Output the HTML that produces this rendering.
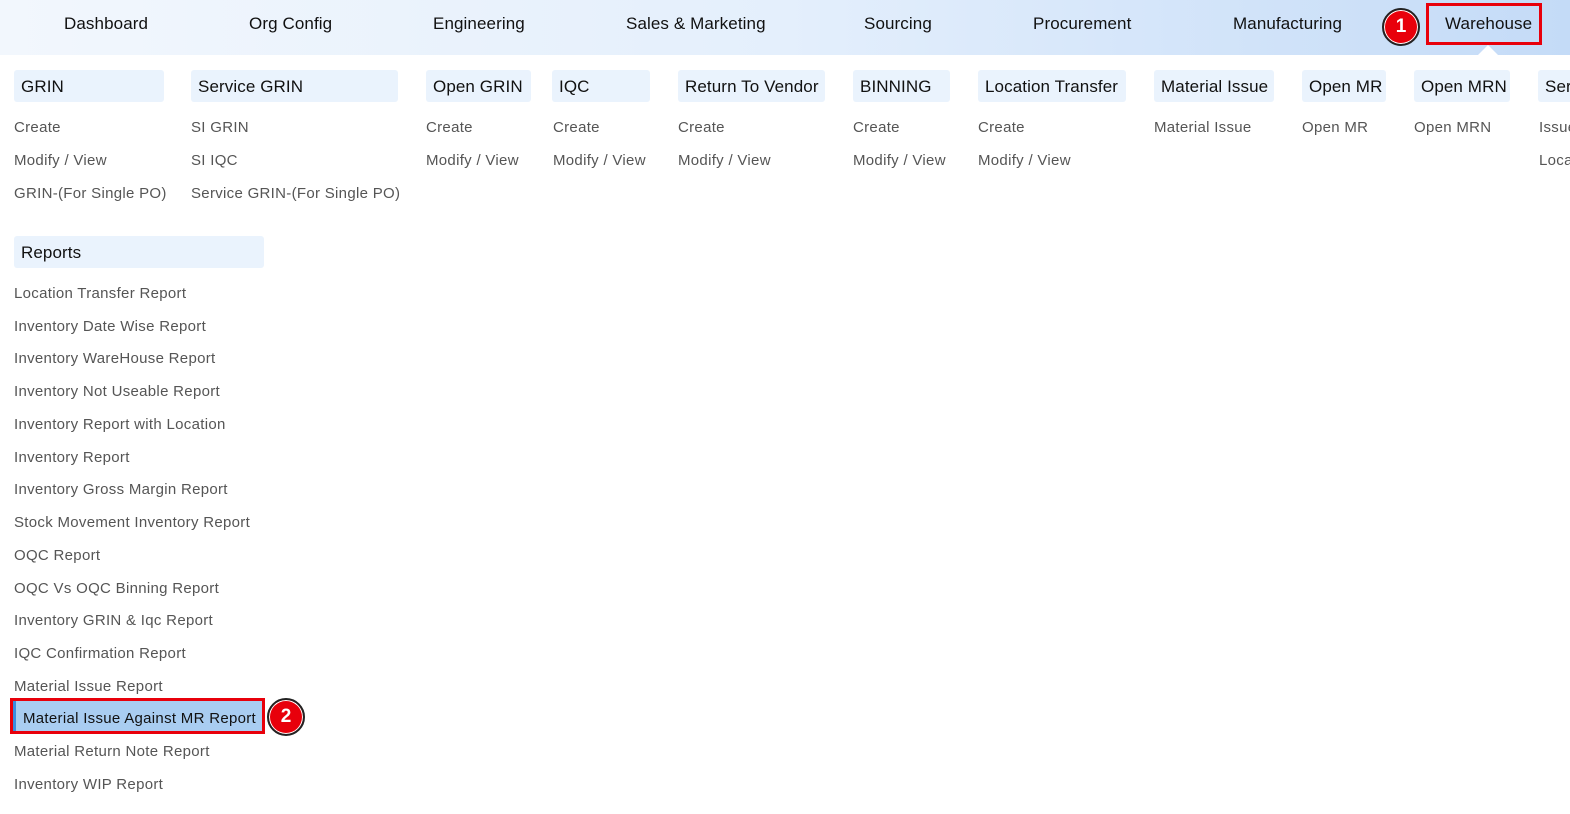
<!DOCTYPE html>
<html><head><style>
body{margin:0;width:1570px;height:814px;overflow:hidden;background:#fff;font-family:"Liberation Sans",sans-serif;position:relative}
.nav{position:absolute;left:0;top:0;width:1570px;height:55px;background:linear-gradient(90deg,#f2f7fd 0%,#e4effc 50%,#c4dbf7 100%)}
.nav span{position:absolute;top:14px;font-size:17px;color:#111;letter-spacing:0.1px}
.h{position:absolute;top:70px;height:32px;background:#eaf3fd;border-radius:3px;font-size:17px;color:#111;line-height:33px;padding-left:7px;box-sizing:border-box;white-space:nowrap;overflow:hidden;letter-spacing:0.1px}
.l{position:absolute;font-size:15px;color:#555;white-space:nowrap;letter-spacing:0.3px;margin-top:1px}
.red{position:absolute;border:3px solid #e8000b;box-sizing:border-box}
.badge{position:absolute;width:38px;height:38px;border-radius:50%;background:#e8000b;border:2px solid #222;box-sizing:border-box;color:#fff;font-weight:bold;font-size:19px;text-align:center;line-height:34px;box-shadow:0 0 0 1px #fff inset}
</style></head><body>
<div class="nav">
<span style="left:64px">Dashboard</span>
<span style="left:249px">Org Config</span>
<span style="left:433px">Engineering</span>
<span style="left:626px">Sales &amp; Marketing</span>
<span style="left:864px">Sourcing</span>
<span style="left:1033px">Procurement</span>
<span style="left:1233px">Manufacturing</span>
<span style="left:1445px">Warehouse</span>
</div>
<div style="position:absolute;left:1478px;top:45px;width:0;height:0;border-left:10px solid transparent;border-right:10px solid transparent;border-bottom:10px solid #fff"></div>
<div class="red" style="left:1426px;top:3px;width:116px;height:42px"></div>
<div class="badge" style="left:1382px;top:8px">1</div>

<div class="h" style="left:14px;width:150px">GRIN</div>
<div class="h" style="left:191px;width:207px">Service GRIN</div>
<div class="h" style="left:426px;width:105px">Open GRIN</div>
<div class="h" style="left:552px;width:98px">IQC</div>
<div class="h" style="left:678px;width:147px">Return To Vendor</div>
<div class="h" style="left:853px;width:97px">BINNING</div>
<div class="h" style="left:978px;width:148px">Location Transfer</div>
<div class="h" style="left:1154px;width:120px">Material Issue</div>
<div class="h" style="left:1302px;width:84px">Open MR</div>
<div class="h" style="left:1414px;width:96px">Open MRN</div>
<div class="h" style="left:1538px;width:60px">Service</div>

<div class="l" style="left:14px;top:118px">Create</div>
<div class="l" style="left:14px;top:151px">Modify / View</div>
<div class="l" style="left:14px;top:184px">GRIN-(For Single PO)</div>
<div class="l" style="left:191px;top:118px">SI GRIN</div>
<div class="l" style="left:191px;top:151px">SI IQC</div>
<div class="l" style="left:191px;top:184px">Service GRIN-(For Single PO)</div>
<div class="l" style="left:426px;top:118px">Create</div>
<div class="l" style="left:426px;top:151px">Modify / View</div>
<div class="l" style="left:553px;top:118px">Create</div>
<div class="l" style="left:553px;top:151px">Modify / View</div>
<div class="l" style="left:678px;top:118px">Create</div>
<div class="l" style="left:678px;top:151px">Modify / View</div>
<div class="l" style="left:853px;top:118px">Create</div>
<div class="l" style="left:853px;top:151px">Modify / View</div>
<div class="l" style="left:978px;top:118px">Create</div>
<div class="l" style="left:978px;top:151px">Modify / View</div>
<div class="l" style="left:1154px;top:118px">Material Issue</div>
<div class="l" style="left:1302px;top:118px">Open MR</div>
<div class="l" style="left:1414px;top:118px">Open MRN</div>
<div class="l" style="left:1539px;top:118px">Issue</div>
<div class="l" style="left:1539px;top:151px">Location</div>

<div class="h" style="left:14px;top:236px;width:250px">Reports</div>
<div class="l" style="left:14px;top:284px">Location Transfer Report</div>
<div class="l" style="left:14px;top:317px">Inventory Date Wise Report</div>
<div class="l" style="left:14px;top:349px">Inventory WareHouse Report</div>
<div class="l" style="left:14px;top:382px">Inventory Not Useable Report</div>
<div class="l" style="left:14px;top:415px">Inventory Report with Location</div>
<div class="l" style="left:14px;top:448px">Inventory Report</div>
<div class="l" style="left:14px;top:480px">Inventory Gross Margin Report</div>
<div class="l" style="left:14px;top:513px">Stock Movement Inventory Report</div>
<div class="l" style="left:14px;top:546px">OQC Report</div>
<div class="l" style="left:14px;top:579px">OQC Vs OQC Binning Report</div>
<div class="l" style="left:14px;top:611px">Inventory GRIN &amp; Iqc Report</div>
<div class="l" style="left:14px;top:644px">IQC Confirmation Report</div>
<div class="l" style="left:14px;top:677px">Material Issue Report</div>
<div style="position:absolute;left:13px;top:701px;width:249px;height:31px;background:#a9cdf1;border-left:3px solid #3a8de0;box-sizing:border-box"></div>
<div class="l" style="left:23px;top:709px;color:#111">Material Issue Against MR Report</div>
<div class="red" style="left:10px;top:698px;width:255px;height:36px"></div>
<div class="badge" style="left:267px;top:698px">2</div>
<div class="l" style="left:14px;top:742px">Material Return Note Report</div>
<div class="l" style="left:14px;top:775px">Inventory WIP Report</div>
</body></html>
